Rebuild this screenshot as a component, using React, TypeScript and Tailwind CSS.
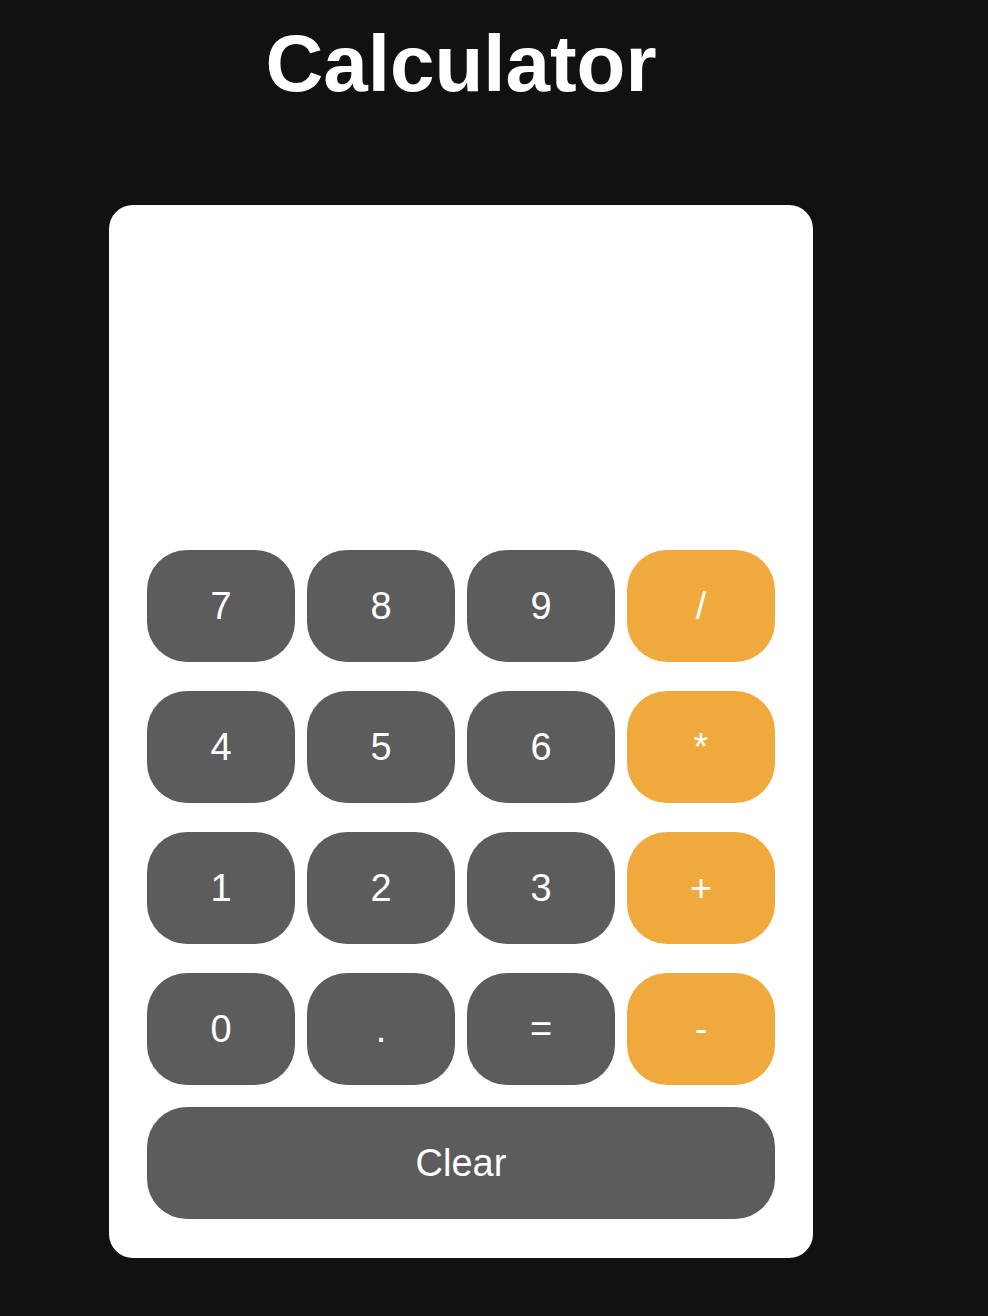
import React, { useState } from 'react';

const keys = [
  { label: '7' }, { label: '8' }, { label: '9' }, { label: '/', op: true },
  { label: '4' }, { label: '5' }, { label: '6' }, { label: '*', op: true },
  { label: '1' }, { label: '2' }, { label: '3' }, { label: '+', op: true },
  { label: '0' }, { label: '.' }, { label: '=' }, { label: '-', op: true },
];

export default function App() {
  const [display, setDisplay] = useState('');

  const press = (k: string) => {
    if (k === '=') {
      try {
        // eslint-disable-next-line no-new-func
        setDisplay(String(Function(`return (${display})`)()));
      } catch {
        setDisplay('Error');
      }
      return;
    }
    setDisplay(display + k);
  };

  return (
    <div className="min-h-[1316px] bg-[#111111] font-['Liberation_Sans',Arial,sans-serif] text-white">
      <div className="ml-[109px] w-[704px] pt-[24px]">
        <h1 className="text-center text-[80px] font-bold leading-none">Calculator</h1>

        <div className="mt-[101px] rounded-[24px] bg-white px-[38px] pt-[38px] pb-[39px]">
          {/* Display */}
          <div className="h-[307px] overflow-hidden text-right text-[56px] leading-[307px] text-[#222]">
            {display}
          </div>

          {/* Keypad */}
          <div className="grid grid-cols-4 gap-x-[12px] gap-y-[29px]">
            {keys.map((k) => (
              <button
                key={k.label}
                onClick={() => press(k.label)}
                className={`flex h-[112px] items-center justify-center rounded-[40px] text-[38px] text-white ${
                  k.op ? 'bg-[#f0a93d]' : 'bg-[#5c5c5c]'
                }`}
              >
                {k.label}
              </button>
            ))}
          </div>

          <button
            onClick={() => setDisplay('')}
            className="mt-[22px] flex h-[112px] w-full items-center justify-center rounded-[40px] bg-[#5c5c5c] text-[38px] text-white"
          >
            Clear
          </button>
        </div>
      </div>
    </div>
  );
}
